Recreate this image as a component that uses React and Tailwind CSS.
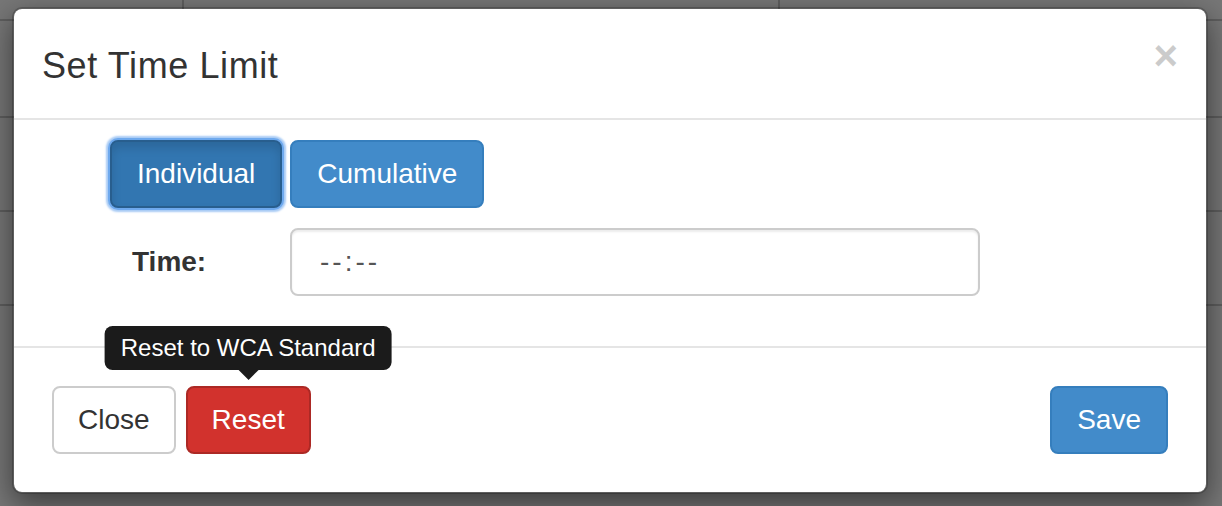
import React from "react";

function BackgroundTable() {
  const rows = ["h-[21px]", "h-[97px]", "h-[94px]", "h-[94px]"];
  return (
    <div className="flex flex-col h-full">
      {rows.map((h, i) => (
        <div key={i} className={`${h} flex border-b-2 border-[#5f5f5f]`}>
          <div className="w-[184px] border-r-2 border-[#5f5f5f]" />
          <div className="w-[596px] border-r-2 border-[#5f5f5f]" />
          <div className="flex-1" />
        </div>
      ))}
      <div className="flex-1" />
    </div>
  );
}

function Tooltip({ children }) {
  return (
    <div className="absolute bottom-full left-1/2 -translate-x-1/2 mb-[6px] flex flex-col items-center pointer-events-none">
      <div className="bg-[#1b1b1b] text-white text-[24px] leading-[32px] px-[16px] py-[6px] rounded-[8px] whitespace-nowrap">
        {children}
      </div>
      <div className="w-0 h-0 border-x-[10px] border-x-transparent border-t-[10px] border-t-[#1b1b1b]" />
    </div>
  );
}

export default function App() {
  return (
    <div
      className="relative w-[1222px] h-[506px] overflow-hidden bg-[#777777] text-[#333333]"
      style={{ fontFamily: '"Liberation Sans", Arial, sans-serif' }}
    >
      <BackgroundTable />

      <div className="absolute left-[12px] top-[7px] w-[1196px] h-[487px] flex flex-col bg-white bg-clip-padding border-2 border-black/20 rounded-[10px] shadow-[0_10px_30px_rgba(0,0,0,0.5)]">
        {/* header */}
        <div className="flex items-start justify-between px-[28px] pt-[31px] pb-[27px] border-b-2 border-[#e5e5e5]">
          <h4 className="text-[36px] leading-[51px] font-medium tracking-[0.6px]">Set Time Limit</h4>
          <button className="-mt-[5px] text-[42px] leading-none font-bold text-black opacity-20">
            ×
          </button>
        </div>

        {/* body */}
        <div className="flex flex-col gap-[20px] pt-[20px] pb-[50px] pl-[96px]">
          <div className="flex gap-[8px]">
            <button className="text-[28px] leading-[40px] px-[25px] py-[12px] rounded-[8px] text-white bg-[#3276b1] border-2 border-[#285e8e] shadow-[inset_0_6px_10px_rgba(0,0,0,0.125),0_0_0_2px_#6ea9ee,0_0_2px_4px_#a8cbf5]">
              Individual
            </button>
            <button className="text-[28px] leading-[40px] px-[25px] py-[12px] rounded-[8px] text-white bg-[#428bca] border-2 border-[#357ebd]">
              Cumulative
            </button>
          </div>
          <div className="flex items-center">
            <label className="w-[180px] pl-[22px] text-[28px] font-bold">Time:</label>
            <div className="w-[690px] h-[68px] flex items-center px-[28px] border-2 border-[#cccccc] rounded-[8px] shadow-[inset_0_2px_2px_rgba(0,0,0,0.075)] text-[28px] text-[#555555] tracking-[3px]">
              --:--
            </div>
          </div>
        </div>

        {/* footer */}
        <div className="flex-1 flex items-start justify-between px-[38px] pt-[38px] border-t-2 border-[#e5e5e5]">
          <div className="flex gap-[10px]">
            <button className="text-[28px] leading-[40px] px-[24px] py-[12px] rounded-[8px] bg-white border-2 border-[#cccccc]">
              Close
            </button>
            <div className="relative">
              <Tooltip>Reset to WCA Standard</Tooltip>
              <button className="text-[28px] leading-[40px] px-[24px] py-[12px] rounded-[8px] text-white bg-[#d2322d] border-2 border-[#ac2925]">
                Reset
              </button>
            </div>
          </div>
          <button className="text-[28px] leading-[40px] px-[25px] py-[12px] rounded-[8px] text-white bg-[#428bca] border-2 border-[#357ebd]">
            Save
          </button>
        </div>
      </div>
    </div>
  );
}
